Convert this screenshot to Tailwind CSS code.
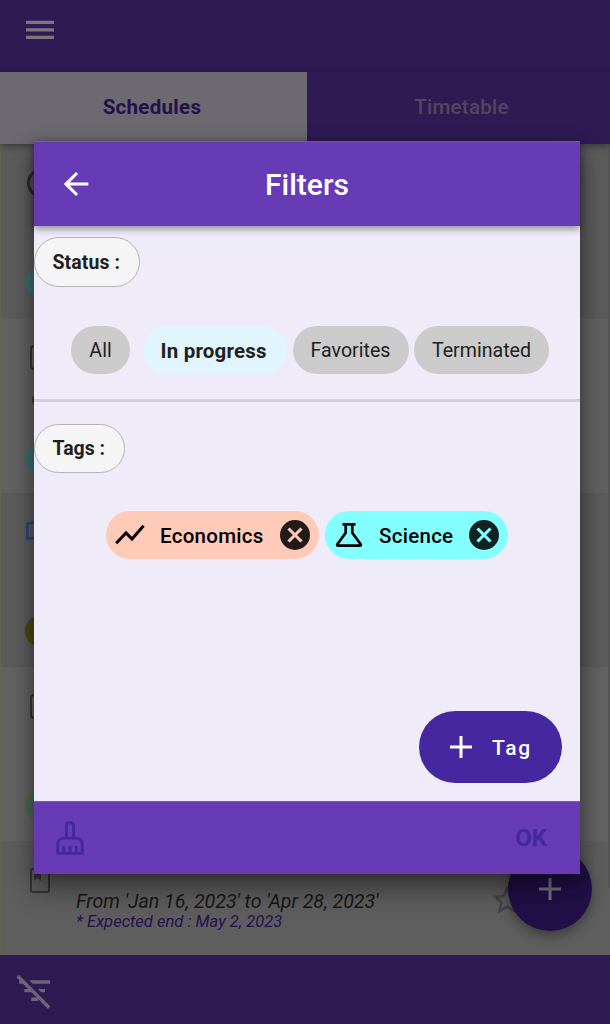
<!DOCTYPE html>
<html lang="en">
<head>
<meta charset="utf-8">
<title>Schedules</title>
<script src="https://cdn.jsdelivr.net/npm/@tailwindcss/browser@4"></script>
</head>
<body class="font-[Roboto,sans-serif]">
<div class="relative w-[610px] h-[1024px] overflow-hidden flex flex-col bg-[#2f1b54]">
  <!-- App bar -->
  <header class="h-[72px] shrink-0 pl-[22px] pt-3">
    <svg class="size-9" viewBox="0 0 24 24" fill="#7d7880"><path d="M2.7 18h18.6v-2.1H2.7V18zm0-5h18.6v-2.1H2.7V13zm0-7.1V8h18.6V5.9H2.7z"/></svg>
  </header>
  <nav class="h-[72px] shrink-0 flex text-[20.5px] leading-none font-medium relative z-10 shadow-[0_2px_7px_rgba(0,0,0,0.4)] bg-[#2f1b54]">
    <div class="w-[307px] bg-[#6c6971] text-[#23114d] flex items-center justify-center pb-px"><span class="font-bold tracking-[0.3px] mr-[3px]">Schedules</span></div>
    <div class="flex-1 text-[#54465f] flex items-center justify-center pb-px"><span class="tracking-[0.28px] mr-[-6px]">Timetable</span></div>
  </nav>
  <!-- Schedule list -->
  <main class="flex-1 flex flex-col border-l border-[#64654d] relative">
    <div class="h-[175px] bg-[#5c5c5c] shrink-0 pl-6 flex flex-col gap-[73px] pt-6">
      <div class="size-[30px] rounded-full border-[3px] border-[#2d2d2d] ml-0.5 shrink-0"></div>
      <div class="size-8 rounded-full bg-[#3b706f] shrink-0 -mt-[5px]"></div>
    </div>
    <div class="h-[174px] bg-[#626262] shrink-0 flex flex-col pt-[26px]">
      <div class="w-5 h-[25px] ml-[29px] border-2 border-[#363636] rounded-sm shrink-0"></div>
      <div class="size-3 rounded-full bg-[#363636] ml-[31px] mt-6 shrink-0"></div>
      <div class="size-8 rounded-full bg-[#3b706f] ml-6 mt-[36px] shrink-0"></div>
    </div>
    <div class="h-[174px] bg-[#5c5c5c] shrink-0 flex flex-col pt-[28px]">
      <svg class="w-6 h-5 ml-[25px] shrink-0" viewBox="0 0 24 20" fill="none" stroke="#244785" stroke-width="2.6"><path d="M1.300 3.500Q1.300 2.700 2.200 2.400L10 1v15.500L1.300 18z"/></svg>
      <div class="size-8 rounded-full bg-[#4b4914] ml-6 mt-[74px] shrink-0"></div>
    </div>
    <div class="h-[174px] bg-[#636363] shrink-0 flex flex-col pt-[27px]">
      <div class="w-5 h-[25px] ml-[29px] border-2 border-[#363636] rounded-sm shrink-0"></div>
      <div class="size-8 rounded-full bg-[#4b6b50] ml-6 mt-[70px] shrink-0"></div>
    </div>
    <div class="flex-1 bg-[#5e5e5e] flex pt-[27px] relative">
      <svg class="w-5 h-[25px] ml-[29px] shrink-0" viewBox="0 0 20 25"><rect x="1" y="1" width="18" height="23" rx="1.5" fill="none" stroke="#353535" stroke-width="2"/><path d="M4 3h7v10l-3.500-3L4 13z" fill="#353535"/></svg>
      <div class="ml-[26px] pt-[23px] italic whitespace-nowrap">
        <p class="text-[19.6px] leading-[22px] tracking-[-0.02px] text-[#181818]">From 'Jan 16, 2023' to 'Apr 28, 2023'</p>
        <p class="text-[16.5px] leading-[18px] tracking-[0.03px] text-[#24124f]">* Expected end : May 2, 2023</p>
      </div>
      <svg class="absolute left-[488px] top-[41px] size-9" viewBox="0 0 24 24" fill="#454545"><path d="M22 9.240l-7.190-.620L12 2 9.190 8.630 2 9.240l5.460 4.730L5.820 21 12 17.270 18.180 21l-1.630-7.030L22 9.240zM12 15.400l-3.760 2.270 1-4.280-3.320-2.880 4.380-.380L12 6.100l1.710 4.040 4.380.380-3.320 2.880 1 4.280L12 15.400z"/></svg>
    </div>
    <div class="absolute right-0 top-0 w-0.5 h-[744px] bg-[#555]"></div>
  </main>
  <footer class="h-[69px] shrink-0 pl-[13.6px] pt-[15px]">
    <svg class="size-[41.3px]" viewBox="0 0 24 24" fill="#6d6577"><path d="M10.830 8H21V6H8.830l2 2zm5 5H18v-2h-4.170l2 2zM14 16.830V18h-4v-2h3.170l-3-3H6v-2h2.170l-3-3H3V6h.170L1.390 4.220l1.410-1.420 18.380 18.380-1.420 1.420L14 16.830z"/></svg>
  </footer>

  <!-- Floating action button -->
  <div class="absolute z-20 left-[508px] top-[847px] size-[84px] rounded-full bg-[#201047] shadow-[0_5px_12px_rgba(0,0,0,0.35)] flex items-center justify-center">
    <svg class="size-[22px]" viewBox="0 0 22 22" stroke="#7a7580" stroke-width="3"><path d="M0 11h22M11 0v22"/></svg>
  </div>

  <!-- Filters dialog -->
  <section class="absolute z-30 left-[34px] top-[141px] w-[546px] h-[733px] flex flex-col bg-[#efebf8] shadow-[0_14px_26px_rgba(0,0,0,0.45),0_2px_14px_rgba(0,0,0,0.15)]">
    <div class="h-[85px] shrink-0 bg-[#673ab6] border-t border-[#7a52b8] relative z-10 grid grid-cols-[84px_1fr_84px] items-center shadow-[0_3px_7px_rgba(0,0,0,0.4)]">
      <svg class="size-9 ml-6" viewBox="0 0 24 24" fill="#fff"><path d="M20.200 11H7.830l5.590-5.590L12 4l-8.200 8 8.200 8 1.410-1.410L7.830 13H20.200v-2z"/></svg>
      <h1 class="text-[30px] leading-none font-medium text-white text-center pt-px">Filters</h1>
    </div>
    <div class="h-[176px] shrink-0 border-b-[3px] border-[#d3cfdc] flex flex-col pt-[11px]">
      <div class="h-[50px] w-[106px] rounded-[25px] border border-[#b4b3b8] bg-[#f5f5f5] text-[19.5px] leading-none font-bold tracking-[0.080px] text-[#1f1f1f] pl-[17.500px] pt-[1.500px] flex items-center shrink-0 whitespace-nowrap">Status :</div>
      <div class="flex ml-[37px] mt-[39.400px] h-[48px] text-[19.600px] leading-none text-[#212121]">
        <div class="w-[59px] h-full rounded-[24px] bg-[#cbcbcb] flex items-center justify-center pt-px">All</div>
        <div class="w-[144px] h-full rounded-[24px] bg-[#e1f5fe] ml-[12.500px] flex items-center pl-[18px] pt-0.5 text-[20.500px] font-bold tracking-[0.200px] whitespace-nowrap">In progress</div>
        <div class="w-[116px] h-full rounded-[24px] bg-[#cbcbcb] ml-[6px] flex items-center justify-center pt-px">Favorites</div>
        <div class="w-[135px] h-full rounded-[24px] bg-[#cbcbcb] ml-[5.500px] flex items-center justify-center pt-px">Terminated</div>
      </div>
    </div>
    <div class="flex-1 flex flex-col pt-[21.500px]">
      <div class="h-[49.500px] w-[91px] rounded-[25px] border border-[#b4b3b8] bg-[#f5f5f5] text-[19.500px] leading-none font-bold text-[#1f1f1f] pl-[17.500px] flex items-center whitespace-nowrap shrink-0">Tags :</div>
      <div class="flex ml-[72px] mt-[38.200px] h-[48px] shrink-0 gap-1.5 text-[20.500px] leading-none font-medium tracking-[0.280px] text-black">
        <div class="w-[213px] rounded-[24px] bg-[#ffcab8] flex items-center pl-[9px] pr-[9px]">
          <svg class="w-[30px] h-[22px] shrink-0" viewBox="0 0 30 22" fill="none" stroke="#000" stroke-width="3"><path d="M1.200 19.200L11 9l6 6L28.600 1.800"/></svg>
          <span class="ml-[15px] flex-1 pt-[2.500px]">Economics</span>
          <svg class="size-[30px] shrink-0" viewBox="0 0 30 30"><circle cx="15" cy="15" r="15" fill="#221b19"/><path d="M8.500 8.500l13 13m0-13l-13 13" stroke="#ffcab8" stroke-width="3.100"/></svg>
        </div>
        <div class="w-[183px] rounded-[24px] bg-[#84ffff] flex items-center pl-[10px] pr-[9px]">
          <svg class="w-[28px] h-[26px] shrink-0" viewBox="0 0 28 26" fill="none" stroke="#000" stroke-width="2.700"><path d="M7.500 2.300h13M10.700 2.500v8.300L2.400 22.200Q1.600 23.700 3.200 23.700h21.600q1.600 0 .8-1.500L17.300 10.800V2.500"/></svg>
          <span class="ml-4 flex-1 pt-[2.500px]">Science</span>
          <svg class="size-[30px] shrink-0" viewBox="0 0 30 30"><circle cx="15" cy="15" r="15" fill="#112222"/><path d="M8.500 8.500l13 13m0-13l-13 13" stroke="#84ffff" stroke-width="3.100"/></svg>
        </div>
      </div>
      <div class="mt-auto mb-[18px] mr-[18px] self-end w-[143px] h-[72px] rounded-[36px] bg-[#45289f] flex items-center pl-[31px] text-white">
        <svg class="size-[22px] shrink-0" viewBox="0 0 22 22" stroke="#fff" stroke-width="3"><path d="M0 11h22M11 0v22"/></svg>
        <span class="ml-5 pt-0.5 text-[21px] leading-none font-medium tracking-[1.800px]">Tag</span>
      </div>
    </div>
    <div class="h-[73px] shrink-0 bg-[#673ab6] border-t border-[#8059c0] flex items-center justify-between pl-[22px] pr-[33px] text-[#4527a0]">
      <svg class="w-7 h-[34px]" viewBox="0 0 28 34" fill="none" stroke="currentColor" stroke-width="2.800"><path d="M10.500 17V4.200q0-2.700 3.500-2.700t3.500 2.700V17M1.700 32.300V24q0-6.800 6.800-6.800h11q6.800 0 6.800 6.800v8.300z"/><path d="M7.800 32v-7M14 32v-7M20.200 32v-7"/></svg>
      <span class="text-[24px] leading-none font-bold">OK</span>
    </div>
  </section>
</div>
</body>
</html>
